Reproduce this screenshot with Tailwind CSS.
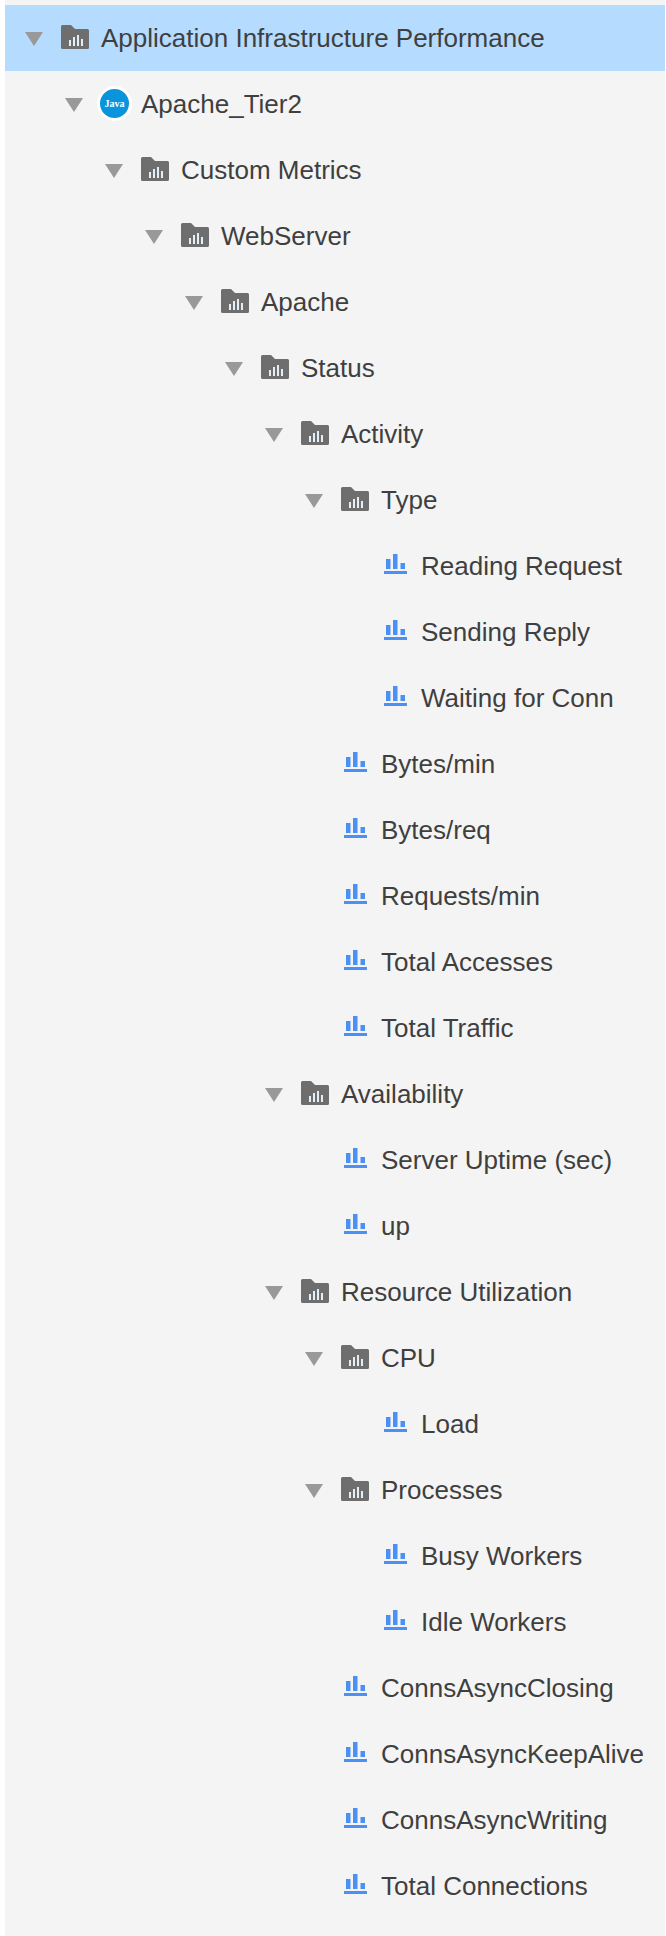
<!DOCTYPE html>
<html lang="en">

<head>
    <meta charset="UTF-8">
    <meta name="viewport" content="width=device-width, initial-scale=1.0">
    <title>Metric Browser</title>
    <script src="https://cdn.jsdelivr.net/npm/@tailwindcss/browser@4"></script>
</head>

<body class="bg-white font-['Liberation_Sans',Arial,sans-serif] text-[26px] text-[#3f3f3f]">
    <!-- shared icons -->
    <svg class="hidden">
        <symbol id="caret" viewBox="0 0 18 14">
            <path d="M0 0H18L9 14Z" fill="#999999" />
        </symbol>
        <symbol id="folder" viewBox="0 0 28 24">
            <path d="M1.5 0H10L14 4H26.5A1.5 1.5 0 0 1 28 5.5V22.5A1.5 1.5 0 0 1 26.5 24H1.5A1.5 1.5 0 0 1 0 22.5V1.5A1.5 1.5 0 0 1 1.5 0Z" fill="#6e6e6e" />
            <path d="M8 15H10V21H8ZM12 12H14V21H12ZM16 10H18V21H16ZM20 14H22V21H20Z" fill="#e4eef6" />
        </symbol>
        <symbol id="chart" viewBox="0 0 23 20">
            <path d="M2 5H6.5V15H2ZM9 0H13.5V15H9ZM16.5 9H21V15H16.5ZM0 17H23V20H0Z" fill="#4a90f5" />
        </symbol>
    </svg>

    <div class="ml-[5px] mr-px min-h-[1936px] pt-[5px] bg-[#f4f4f4]">
        <div class="h-[66px] flex items-center pl-[20px] bg-[#b5dbff]">
            <svg class="w-[18px] h-[14px] mr-[18px] mt-[2px]"><use href="#caret" /></svg>
            <svg class="w-[28px] h-[24px] mr-[12px] -mt-[2px]"><use href="#folder" /></svg>
            <span>Application Infrastructure Performance</span>
        </div>

        <div class="pl-[40px]">
            <div class="h-[66px] flex items-center pl-[20px]">
                <svg class="w-[18px] h-[14px] mr-[14px] mt-[2px]"><use href="#caret" /></svg>
                <div class="w-[35px] h-[35px] mr-[9px] -mt-[2px] rounded-full border-[3px] border-white bg-[#0a94dc] flex items-center justify-center font-['Liberation_Serif',serif] font-bold text-[10px] text-white">Java</div>
                <span>Apache_Tier2</span>
            </div>

            <div class="pl-[40px]">
                <div class="h-[66px] flex items-center pl-[20px]">
                    <svg class="w-[18px] h-[14px] mr-[18px] mt-[2px]"><use href="#caret" /></svg>
                    <svg class="w-[28px] h-[24px] mr-[12px] -mt-[2px]"><use href="#folder" /></svg>
                    <span>Custom Metrics</span>
                </div>

                <div class="pl-[40px]">
                    <div class="h-[66px] flex items-center pl-[20px]">
                        <svg class="w-[18px] h-[14px] mr-[18px] mt-[2px]"><use href="#caret" /></svg>
                        <svg class="w-[28px] h-[24px] mr-[12px] -mt-[2px]"><use href="#folder" /></svg>
                        <span>WebServer</span>
                    </div>

                    <div class="pl-[40px]">
                        <div class="h-[66px] flex items-center pl-[20px]">
                            <svg class="w-[18px] h-[14px] mr-[18px] mt-[2px]"><use href="#caret" /></svg>
                            <svg class="w-[28px] h-[24px] mr-[12px] -mt-[2px]"><use href="#folder" /></svg>
                            <span>Apache</span>
                        </div>

                        <div class="pl-[40px]">
                            <div class="h-[66px] flex items-center pl-[20px]">
                                <svg class="w-[18px] h-[14px] mr-[18px] mt-[2px]"><use href="#caret" /></svg>
                                <svg class="w-[28px] h-[24px] mr-[12px] -mt-[2px]"><use href="#folder" /></svg>
                                <span>Status</span>
                            </div>

                            <div class="pl-[40px]">
                                <!-- Activity -->
                                <div class="h-[66px] flex items-center pl-[20px]">
                                    <svg class="w-[18px] h-[14px] mr-[18px] mt-[2px]"><use href="#caret" /></svg>
                                    <svg class="w-[28px] h-[24px] mr-[12px] -mt-[2px]"><use href="#folder" /></svg>
                                    <span>Activity</span>
                                </div>
                                <div class="pl-[40px]">
                                    <div class="h-[66px] flex items-center pl-[20px]">
                                        <svg class="w-[18px] h-[14px] mr-[18px] mt-[2px]"><use href="#caret" /></svg>
                                        <svg class="w-[28px] h-[24px] mr-[12px] -mt-[2px]"><use href="#folder" /></svg>
                                        <span>Type</span>
                                    </div>
                                    <div class="pl-[40px]">
                                        <div class="h-[66px] flex items-center pl-[59px]">
                                            <svg class="w-[23px] h-[20px] mr-[14px] -mt-[4px]"><use href="#chart" /></svg>
                                            <span>Reading Request</span>
                                        </div>
                                        <div class="h-[66px] flex items-center pl-[59px]">
                                            <svg class="w-[23px] h-[20px] mr-[14px] -mt-[4px]"><use href="#chart" /></svg>
                                            <span>Sending Reply</span>
                                        </div>
                                        <div class="h-[66px] flex items-center pl-[59px]">
                                            <svg class="w-[23px] h-[20px] mr-[14px] -mt-[4px]"><use href="#chart" /></svg>
                                            <span>Waiting for Conn</span>
                                        </div>
                                    </div>
                                    <div class="h-[66px] flex items-center pl-[59px]">
                                        <svg class="w-[23px] h-[20px] mr-[14px] -mt-[4px]"><use href="#chart" /></svg>
                                        <span>Bytes/min</span>
                                    </div>
                                    <div class="h-[66px] flex items-center pl-[59px]">
                                        <svg class="w-[23px] h-[20px] mr-[14px] -mt-[4px]"><use href="#chart" /></svg>
                                        <span>Bytes/req</span>
                                    </div>
                                    <div class="h-[66px] flex items-center pl-[59px]">
                                        <svg class="w-[23px] h-[20px] mr-[14px] -mt-[4px]"><use href="#chart" /></svg>
                                        <span>Requests/min</span>
                                    </div>
                                    <div class="h-[66px] flex items-center pl-[59px]">
                                        <svg class="w-[23px] h-[20px] mr-[14px] -mt-[4px]"><use href="#chart" /></svg>
                                        <span>Total Accesses</span>
                                    </div>
                                    <div class="h-[66px] flex items-center pl-[59px]">
                                        <svg class="w-[23px] h-[20px] mr-[14px] -mt-[4px]"><use href="#chart" /></svg>
                                        <span>Total Traffic</span>
                                    </div>
                                </div>

                                <!-- Availability -->
                                <div class="h-[66px] flex items-center pl-[20px]">
                                    <svg class="w-[18px] h-[14px] mr-[18px] mt-[2px]"><use href="#caret" /></svg>
                                    <svg class="w-[28px] h-[24px] mr-[12px] -mt-[2px]"><use href="#folder" /></svg>
                                    <span>Availability</span>
                                </div>
                                <div class="pl-[40px]">
                                    <div class="h-[66px] flex items-center pl-[59px]">
                                        <svg class="w-[23px] h-[20px] mr-[14px] -mt-[4px]"><use href="#chart" /></svg>
                                        <span>Server Uptime (sec)</span>
                                    </div>
                                    <div class="h-[66px] flex items-center pl-[59px]">
                                        <svg class="w-[23px] h-[20px] mr-[14px] -mt-[4px]"><use href="#chart" /></svg>
                                        <span>up</span>
                                    </div>
                                </div>

                                <!-- Resource Utilization -->
                                <div class="h-[66px] flex items-center pl-[20px]">
                                    <svg class="w-[18px] h-[14px] mr-[18px] mt-[2px]"><use href="#caret" /></svg>
                                    <svg class="w-[28px] h-[24px] mr-[12px] -mt-[2px]"><use href="#folder" /></svg>
                                    <span>Resource Utilization</span>
                                </div>
                                <div class="pl-[40px]">
                                    <div class="h-[66px] flex items-center pl-[20px]">
                                        <svg class="w-[18px] h-[14px] mr-[18px] mt-[2px]"><use href="#caret" /></svg>
                                        <svg class="w-[28px] h-[24px] mr-[12px] -mt-[2px]"><use href="#folder" /></svg>
                                        <span>CPU</span>
                                    </div>
                                    <div class="pl-[40px]">
                                        <div class="h-[66px] flex items-center pl-[59px]">
                                            <svg class="w-[23px] h-[20px] mr-[14px] -mt-[4px]"><use href="#chart" /></svg>
                                            <span>Load</span>
                                        </div>
                                    </div>
                                    <div class="h-[66px] flex items-center pl-[20px]">
                                        <svg class="w-[18px] h-[14px] mr-[18px] mt-[2px]"><use href="#caret" /></svg>
                                        <svg class="w-[28px] h-[24px] mr-[12px] -mt-[2px]"><use href="#folder" /></svg>
                                        <span>Processes</span>
                                    </div>
                                    <div class="pl-[40px]">
                                        <div class="h-[66px] flex items-center pl-[59px]">
                                            <svg class="w-[23px] h-[20px] mr-[14px] -mt-[4px]"><use href="#chart" /></svg>
                                            <span>Busy Workers</span>
                                        </div>
                                        <div class="h-[66px] flex items-center pl-[59px]">
                                            <svg class="w-[23px] h-[20px] mr-[14px] -mt-[4px]"><use href="#chart" /></svg>
                                            <span>Idle Workers</span>
                                        </div>
                                    </div>
                                    <div class="h-[66px] flex items-center pl-[59px]">
                                        <svg class="w-[23px] h-[20px] mr-[14px] -mt-[4px]"><use href="#chart" /></svg>
                                        <span>ConnsAsyncClosing</span>
                                    </div>
                                    <div class="h-[66px] flex items-center pl-[59px]">
                                        <svg class="w-[23px] h-[20px] mr-[14px] -mt-[4px]"><use href="#chart" /></svg>
                                        <span>ConnsAsyncKeepAlive</span>
                                    </div>
                                    <div class="h-[66px] flex items-center pl-[59px]">
                                        <svg class="w-[23px] h-[20px] mr-[14px] -mt-[4px]"><use href="#chart" /></svg>
                                        <span>ConnsAsyncWriting</span>
                                    </div>
                                    <div class="h-[66px] flex items-center pl-[59px]">
                                        <svg class="w-[23px] h-[20px] mr-[14px] -mt-[4px]"><use href="#chart" /></svg>
                                        <span>Total Connections</span>
                                    </div>
                                </div>
                            </div>
                        </div>
                    </div>
                </div>
            </div>
        </div>
    </div>
</body>

</html>
